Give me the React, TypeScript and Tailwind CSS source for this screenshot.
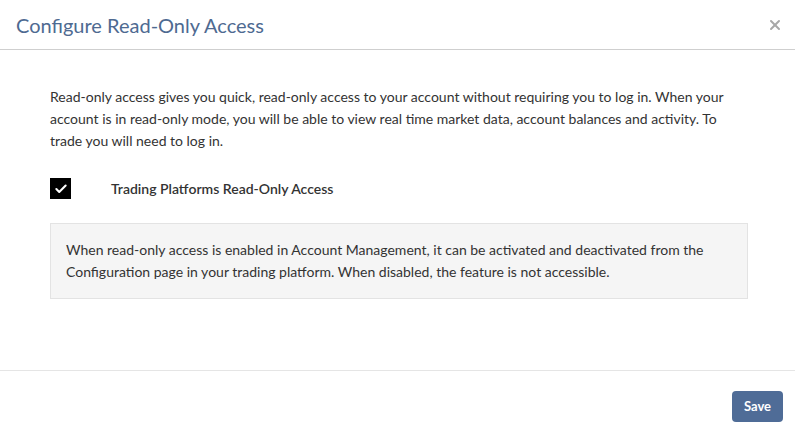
import { Check, X } from "lucide-react";

export default function App() {
  return (
    <div className="w-[795px] h-[435px] bg-white flex flex-col font-['Lato',sans-serif] text-[#333]">
      <div className="h-[50px] flex items-center justify-between pl-4 pr-3 border-b border-[#cfcfcf]">
        <h4 className="text-[20px] text-[#4e6a91]">Configure Read-Only Access</h4>
        <X className="w-4 h-4 text-[#a8a8a8]" strokeWidth={3} />
      </div>
      <div className="flex-1 px-[50px] pt-[36px] border-b border-[#e5e5e5]">
        <p className="text-[14px] leading-[22px] pr-[20px]">
          Read-only access gives you quick, read-only access to your account without requiring you to log in. When your
          account is in read-only mode, you will be able to view real time market data, account balances and activity. To
          trade you will need to log in.
        </p>
        <div className="flex items-center mt-[26px]">
          <div className="w-[21px] h-[21px] bg-black flex items-center justify-center">
            <Check className="w-3.5 h-3.5 text-white" strokeWidth={3.5} />
          </div>
          <span className="ml-[40px] text-[14px] font-semibold">Trading Platforms Read-Only Access</span>
        </div>
        <div className="mt-[24px] w-[698px] bg-[#f5f5f5] border border-[#e3e3e3] px-[15px] py-[15px] text-[14px] leading-[22px]">
          When read-only access is enabled in Account Management, it can be activated and deactivated from the
          Configuration page in your trading platform. When disabled, the feature is not accessible.
        </div>
      </div>
      <div className="h-[64px] flex items-start justify-end pr-[12px] pt-[20px]">
        <button className="h-[31px] px-[12px] rounded bg-[#4f6c97] text-white text-[13px] font-bold">Save</button>
      </div>
    </div>
  );
}
